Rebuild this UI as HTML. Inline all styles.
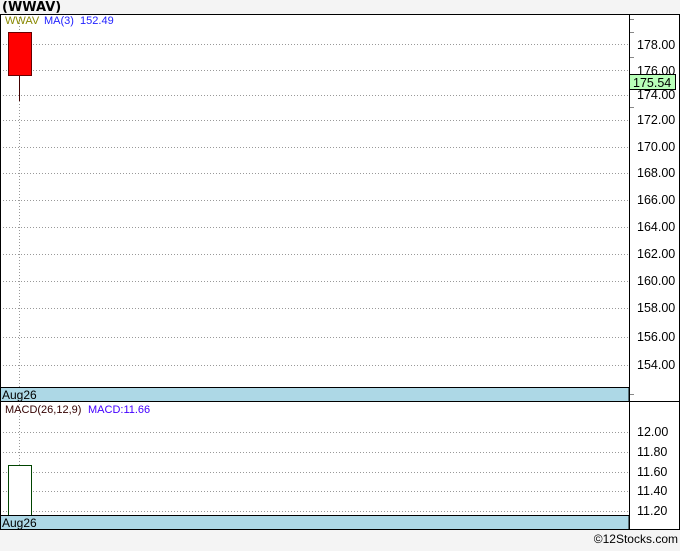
<!DOCTYPE html>
<html><head><style>
body{margin:0;background:#f4f4f4;width:680px;height:546px;overflow:hidden}
svg text{font-family:"Liberation Sans",sans-serif}
</style></head><body>
<svg width="680" height="546" xmlns="http://www.w3.org/2000/svg">
<rect width="680" height="546" fill="#f4f4f4"/>
<text x="2" y="11" font-size="13" font-weight="bold" fill="#000" style="font-family:'DejaVu Sans',sans-serif">(WWAV)</text>
<rect x="0" y="14" width="680" height="516" fill="#fff"/>
<g stroke="#999" stroke-dasharray="1,2" stroke-width="1">
<line x1="0" x2="629" y1="44.5" y2="44.5"/><line x1="0" x2="629" y1="70.5" y2="70.5"/><line x1="0" x2="629" y1="95.5" y2="95.5"/>
<line x1="0" x2="629" y1="120.5" y2="120.5"/><line x1="0" x2="629" y1="147.5" y2="147.5"/><line x1="0" x2="629" y1="173.5" y2="173.5"/>
<line x1="0" x2="629" y1="200.5" y2="200.5"/><line x1="0" x2="629" y1="227.5" y2="227.5"/><line x1="0" x2="629" y1="254.5" y2="254.5"/>
<line x1="0" x2="629" y1="281.5" y2="281.5"/><line x1="0" x2="629" y1="308.5" y2="308.5"/><line x1="0" x2="629" y1="337.5" y2="337.5"/>
<line x1="0" x2="629" y1="365.5" y2="365.5"/>
<line x1="0" x2="629" y1="432.5" y2="432.5"/><line x1="0" x2="629" y1="452.5" y2="452.5"/><line x1="0" x2="629" y1="472.5" y2="472.5"/>
<line x1="0" x2="629" y1="491.5" y2="491.5"/><line x1="0" x2="629" y1="511.5" y2="511.5"/>
<line x1="19.5" x2="19.5" y1="14" y2="530"/>
</g>
<g font-size="12.5" fill="#000">
<text x="637" y="49">178.00</text><text x="637" y="75">176.00</text><text x="637" y="99">174.00</text>
<text x="637" y="124">172.00</text><text x="637" y="151">170.00</text><text x="637" y="177">168.00</text>
<text x="637" y="204">166.00</text><text x="637" y="231">164.00</text><text x="637" y="258">162.00</text>
<text x="637" y="285">160.00</text><text x="637" y="312">158.00</text><text x="637" y="341">156.00</text>
<text x="637" y="369">154.00</text>
<text x="637" y="436">12.00</text><text x="637" y="456">11.80</text><text x="637" y="476">11.60</text>
<text x="637" y="495">11.40</text><text x="637" y="515">11.20</text>
</g>
<g stroke="#888"><line x1="629" x2="634" y1="19.5" y2="19.5"/><line x1="629" x2="634" y1="32.5" y2="32.5"/><line x1="629" x2="634" y1="57.5" y2="57.5"/><line x1="629" x2="634" y1="107.5" y2="107.5"/><line x1="629" x2="634" y1="394.5" y2="394.5"/></g>
<line x1="19.5" x2="19.5" y1="32" y2="101" stroke="#400"/>
<rect x="8.5" y="32.5" width="23" height="43" fill="#f00" stroke="#600"/>
<text x="5" y="24" font-size="11" fill="#880">WWAV</text>
<text x="44" y="24" font-size="11" fill="#22f">MA(3)&#160;&#160;152.49</text>
<rect x="629.5" y="74.5" width="46" height="15" fill="#b8ffb8" stroke="#000"/>
<text x="633" y="87" font-size="12.5" fill="#000">175.54</text>
<rect x="0" y="387.5" width="629" height="14" fill="#add8e6" stroke="#000"/>
<text x="2" y="399" font-size="12" fill="#000">Aug26</text>
<line x1="0" x2="680" y1="401.5" y2="401.5" stroke="#000"/>
<text x="5" y="413" font-size="11" fill="#300">MACD(26,12,9)</text>
<text x="88" y="413" font-size="11" fill="#40f">MACD:11.66</text>
<rect x="8.5" y="465.5" width="23" height="50" fill="#fff" stroke="#040"/>
<rect x="0" y="515.5" width="629" height="14" fill="#add8e6" stroke="#000"/>
<text x="2" y="527" font-size="12" fill="#000">Aug26</text>
<line x1="629.5" x2="629.5" y1="14" y2="530" stroke="#000"/>
<rect x="0.5" y="14.5" width="679" height="515" fill="none" stroke="#000"/>
<text x="678" y="543" font-size="12" fill="#000" text-anchor="end">©12Stocks.com</text>
</svg>
</body></html>
